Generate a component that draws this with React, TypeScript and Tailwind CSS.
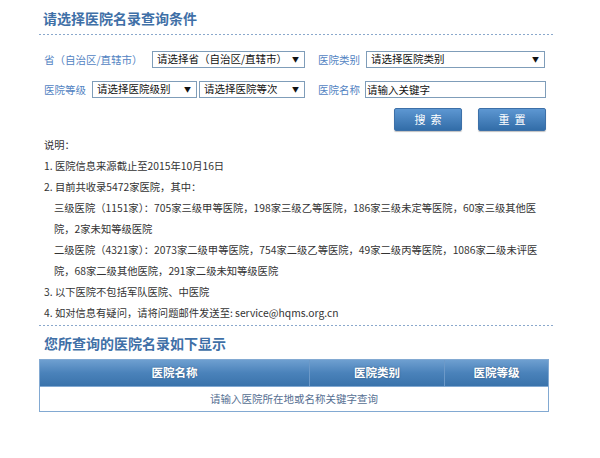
import React from "react";

const font = { fontFamily: '"Noto Sans CJK SC", "Liberation Sans", sans-serif' };

function Select({ text, w }: { text: string; w: string }) {
  return (
    <div className={`${w} h-[17px] border border-[#7f9db9] bg-white flex items-center justify-between pl-[4px] pr-[5px] text-[10.5px] text-[#111] leading-none`}>
      <span>{text}</span>
      <span className="text-[7px]">▼</span>
    </div>
  );
}

function Dots() {
  return <div className="h-px bg-[repeating-linear-gradient(to_right,#8aa8cc_0_2px,transparent_2px_4px)]" />;
}

const notes = [
  { text: "1. 医院信息来源截止至2015年10月16日", indent: false },
  { text: "2. 目前共收录5472家医院，其中：", indent: false },
  { text: "三级医院（1151家）：705家三级甲等医院，198家三级乙等医院，186家三级未定等医院，60家三级其他医", indent: true },
  { text: "院，2家未知等级医院", indent: true },
  { text: "二级医院（4321家）：2073家二级甲等医院，754家二级乙等医院，49家二级丙等医院，1086家二级未评医", indent: true },
  { text: "院，68家二级其他医院，291家二级未知等级医院", indent: true },
  { text: "3. 以下医院不包括军队医院、中医院", indent: false },
  { text: "4. 如对信息有疑问，请将问题邮件发送至: service@hqms.org.cn", indent: false },
];

const btn =
  "w-[68px] h-[23px] rounded-[2px] border border-[#3d70a8] bg-gradient-to-b from-[#5d97d2] to-[#326da8] text-white text-[11px] tracking-[5px] pl-[5px] shadow-[0_1px_1px_rgba(0,0,0,0.25)]";

export default function App() {
  return (
    <div className="w-[600px] h-[458px] bg-white" style={font}>
      <div className="ml-[39px] w-[514px] pt-[8px]">
        <h2 className="text-[14px] font-bold text-[#3f70a7] pl-[4px] h-[20px] leading-[20px]">请选择医院名录查询条件</h2>
        <div className="mt-[6px]">
          <Dots />
        </div>

        <div className="mt-[16px] flex items-center h-[17px]">
          <span className="text-[10.5px] text-[#5283c2] w-[113px] pl-[5px] whitespace-nowrap">省（自治区/直辖市）</span>
          <Select text="请选择省（自治区/直辖市）" w="w-[153px]" />
          <span className="text-[10.5px] text-[#5283c2] ml-[13px] w-[48px]">医院类别</span>
          <Select text="请选择医院类别" w="w-[179px]" />
        </div>

        <div className="mt-[13px] flex items-center h-[17px]">
          <span className="text-[10.5px] text-[#5283c2] w-[53px] pl-[5px] whitespace-nowrap">医院等级</span>
          <Select text="请选择医院级别" w="w-[105px]" />
          <div className="w-[2px]" />
          <Select text="请选择医院等次" w="w-[106px]" />
          <span className="text-[10.5px] text-[#5283c2] ml-[13px] w-[47px]">医院名称</span>
          <div className="w-[181px] h-[17px] border border-[#7f9db9] bg-white flex items-center pl-[1px] text-[10.5px] text-[#111]">请输入关键字</div>
        </div>

        <div className="mt-[10px] flex justify-end gap-[16px] pr-[7px]">
          <button className={btn}>搜索</button>
          <button className={btn}>重置</button>
        </div>

        <div className="mt-[3px] text-[10.3px] text-[#333] pl-[5px]">
          <div className="h-[21px] leading-[21px]">说明：</div>
          {notes.map((n, i) => (
            <div key={i} className={`h-[21px] leading-[21px] whitespace-nowrap ${n.indent ? "pl-[10px]" : ""}`}>{n.text}</div>
          ))}
        </div>
        <div className="mt-[2px]">
          <Dots />
        </div>

        <h2 className="text-[14px] font-bold text-[#3f70a7] pl-[5px] h-[20px] leading-[20px] mt-[7px]">您所查询的医院名录如下显示</h2>

        <div className="mt-[6px] w-[510px] border border-[#82a9d2]">
          <div className="flex h-[26px] bg-gradient-to-b from-[#6e9fd0] via-[#4a82ba] to-[#3a73ab] text-white text-[11.5px] font-bold [text-shadow:0_0_2px_rgba(0,0,0,0.3)]">
            <div className="w-[270px] flex items-center justify-center border-r border-[#6c99c8]">医院名称</div>
            <div className="w-[135px] flex items-center justify-center border-r border-[#6c99c8]">医院类别</div>
            <div className="flex-1 flex items-center justify-center">医院等级</div>
          </div>
          <div className="h-[25px] flex items-center justify-center text-[10.5px] text-[#566f92] border-t border-[#82a9d2]">请输入医院所在地或名称关键字查询</div>
        </div>
      </div>
    </div>
  );
}
